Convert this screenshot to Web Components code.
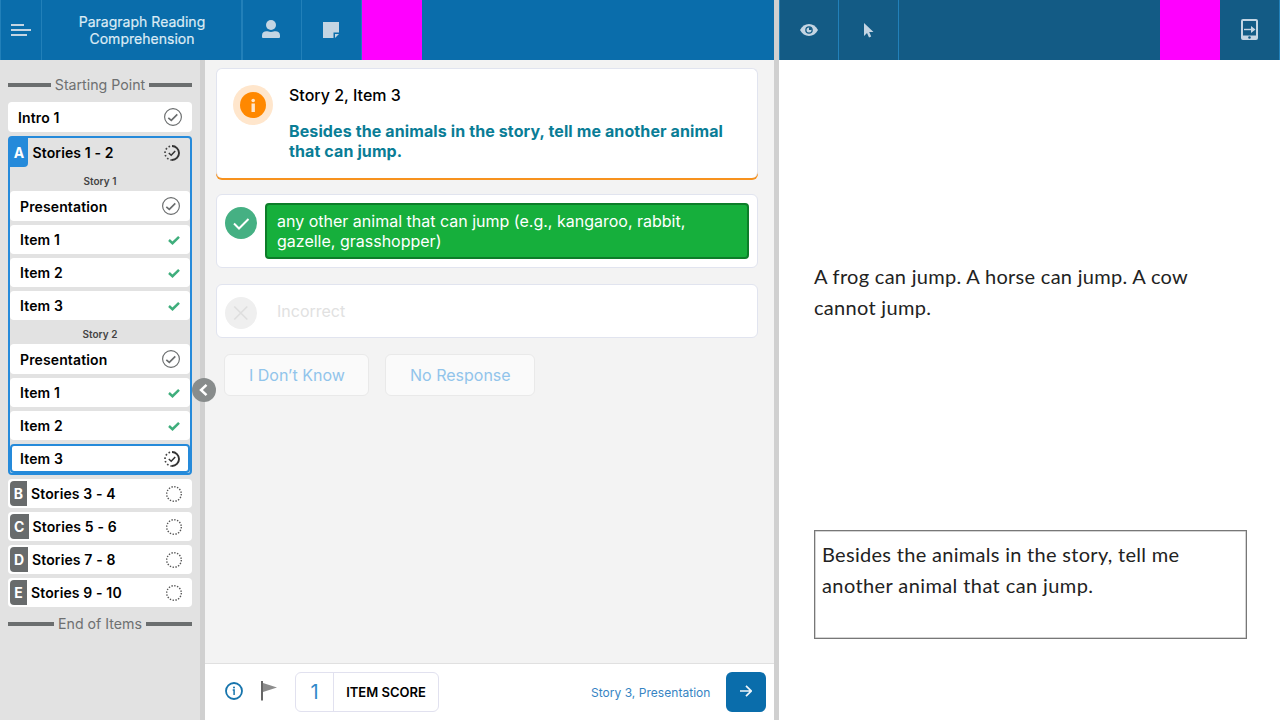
<!DOCTYPE html>
<html lang="en">
<head>
<meta charset="utf-8">
<title>Paragraph Reading Comprehension</title>
<style>
html,body{margin:0;height:100%;overflow:hidden}
body{font-family:Inter,"Liberation Sans",sans-serif;color:#000}
</style>
</head>
<body>
<assessment-app></assessment-app>
<script>
const define = (name, css, html) => customElements.define(name, class extends HTMLElement {
  constructor() {
    super();
    const t = document.createElement('template');
    t.innerHTML = `<style>*{box-sizing:border-box}:host{display:block;box-sizing:border-box}${css}</style>` + (typeof html === 'function' ? '' : html);
    this.attachShadow({mode: 'open'}).append(t.content.cloneNode(true));
  }
  connectedCallback() {
    if (typeof html !== 'function' || this.ready) return;
    this.ready = true;
    const t = document.createElement('template');
    t.innerHTML = html(this);
    this.shadowRoot.append(t.content);
  }
});

const ICONS = {
  menu: [20, 12, '<path d="M0 1h13M0 6h20M0 11h16" stroke="#c4d5e3" stroke-width="2"/>'],
  user: [18, 18, '<circle cx="9" cy="5" r="5" fill="#c4d5e3"/><path d="M0 18v-2.500C0 12.500 2 11.300 4.500 11.300c1.500 0 2.500.7 4.500.7s3-.7 4.500-.7c2.500 0 4.500 1.200 4.500 4.200V17q0 1-1 1H1q-1 0-1-1z" fill="#c4d5e3"/>'],
  note: [16, 16, '<path d="M0 0h16v10.500h-5.500V16H0z" fill="#c4d5e3"/><path d="M12 16v-4h4z" fill="#c4d5e3"/>'],
  eye: [18, 12, '<path d="M0 6C2 2.200 5.200 0 9 0s7 2.200 9 6c-2 3.800-5.200 6-9 6S2 9.800 0 6z" fill="#c4d5e3"/><circle cx="9" cy="6" r="3.800" fill="#135b85"/><circle cx="9" cy="6" r="2.500" fill="#c4d5e3"/><path d="M9 3.200V6h2.800a2.800 2.800 0 0 0-2.800-2.800z" fill="#135b85"/>'],
  pointer: [10, 15, '<path d="M0 0v13l3-3 2 4.500 2.200-1L5.200 9H9.500z" fill="#c4d5e3"/>'],
  tablet: [17, 21, '<rect x="1" y="1" width="15" height="19" rx="1" fill="none" stroke="#c4d5e3" stroke-width="2"/><path d="M1 16.500h15V20H1z" fill="#c4d5e3"/><circle cx="8.500" cy="18.500" r="1.300" fill="#135b85"/><path d="M3 10.500h8" stroke="#c4d5e3" stroke-width="1.400"/><path d="M10 7l4.500 3.500-4.500 3.500z" fill="#c4d5e3"/>'],
  done: [18, 18, '<circle cx="9" cy="9" r="8.400" fill="none" stroke="#6a6d6e" stroke-width="1.150"/><path d="M4.300 9.800l3 2.500 6-6" fill="none" stroke="#6a6d6e" stroke-width="1.700"/>'],
  partial: [16, 16, '<path d="M8 1a7 7 0 0 1 0 14" fill="none" stroke="#333" stroke-width="1.900"/><path d="M8 15A7 7 0 0 1 8 1" fill="none" stroke="#444" stroke-width="1.700" stroke-dasharray="1.600 2.060"/><path d="M4.800 8l2.400 2.200L11.200 6" fill="none" stroke="#333" stroke-width="1.500"/>'],
  check: [12, 10, '<path d="M1 5l3.500 3.200L11 1.800" fill="none" stroke="#3fae7c" stroke-width="2.500"/>'],
  empty: [16, 16, '<circle cx="8" cy="8" r="7.300" fill="none" stroke="#555" stroke-width="1.400" stroke-dasharray="1.400 1.467"/>'],
  notice: [40, 40, '<circle cx="20" cy="20" r="20" fill="#ffe6cc"/><circle cx="20" cy="20" r="13" fill="#ff8800"/><path d="M18.500 18.500h3.400V27h-3.400z" fill="#ffe6cc"/><circle cx="20.200" cy="15.500" r="1.800" fill="#ffe6cc"/>'],
  correct: [32, 32, '<circle cx="16" cy="16" r="16" fill="#45b083"/><path d="M9 16.500l5 5L23.500 12" fill="none" stroke="#fff" stroke-width="2"/>'],
  wrong: [32, 32, '<circle cx="16" cy="16" r="16" fill="#efefef"/><path d="M9.300 9.500l13 13m0-13l-13 13" stroke="#dedede" stroke-width="1.600"/>'],
  info: [18, 18, '<circle cx="9" cy="9" r="8" fill="none" stroke="#1674ac" stroke-width="1.800"/><path d="M7.700 8H9.100V13" fill="none" stroke="#1674ac" stroke-width="1.500"/><circle cx="9" cy="5.500" r="1" fill="#1674ac"/>'],
  flag: [16, 20, '<path d="M0 0h2v19.500H0z" fill="#666"/><path d="M2 2l14 4.500L2 11z" fill="#8c8c8c"/>'],
  arrow: [12, 12, '<path d="M0 6h11M6 .8L11.200 6 6 11.200" fill="none" stroke="#f0f6fa" stroke-width="1.700"/>'],
  collapse: [24, 24, '<circle cx="12" cy="12" r="12" fill="#888c8c"/><path d="M14.500 6.800L9 12l5.500 5.200" fill="none" stroke="#fff" stroke-width="2.500"/>']
};
define('ui-icon', ':host{flex:none}svg{display:block}', el => {
  const [w, h, body] = ICONS[el.getAttribute('name')];
  return `<svg width="${w}" height="${h}" viewBox="0 0 ${w} ${h}">${body}</svg>`;
});

define('tool-cell', `:host{flex:none;width:60px;height:60px;display:flex;align-items:center;justify-content:center;border-right:1px solid #2280b9}
:host([blank]){background:#f0f;border:0}`, '<slot></slot>');

define('top-bar', `:host{display:flex;height:60px;background:#0a6dab;border-left:1px solid #2280b9}
:host([dark]){background:#135b85}`, '<slot></slot>');

define('section-rule', `:host{display:flex;align-items:center;gap:4px;height:34px;font-size:14.200px;color:#6e7071;white-space:nowrap}
i{flex:1;height:4px;background:#6b6e6f}span{display:block;margin-top:-2px}`, '<i></i><span><slot></slot></span><i></i>');

define('nav-row', `:host{display:flex;align-items:center;height:29px;margin-bottom:4px;padding:0 10px;background:#fff;border-radius:4px;font-size:14px;font-weight:600;letter-spacing:.13px}
:host([tall]){height:30px}
:host([inner]){padding-right:10px}
:host([current]){border:2px solid #258ada;padding:0 8px;margin-bottom:0}
:host([letter]){padding:0 10px 0 2px}
:host([group]){background:none;padding:0 10px 0 0;margin:0}
b{height:25px;width:17px;border-radius:4px 0 0 4px;background:#686b6c;color:#fff;display:flex;align-items:center;justify-content:center;margin-right:4px;font-weight:700}
:host([letter=C]) b{width:18.500px}:host([letter=D]) b{width:18px}
:host([group]) b{width:18px;height:29px;background:#258ada;border-radius:0 0 4px 0;margin-right:4.500px;align-self:flex-start}
:host([group]) span{margin-top:-1px}
span{flex:1;white-space:nowrap}`,
el => `${el.hasAttribute('letter') ? `<b>${el.getAttribute('letter')}</b>` : ''}<span><slot></slot></span><ui-icon name="${el.getAttribute('state')}"></ui-icon>`);

define('story-label', ':host{text-align:center;height:23px;line-height:27px;font-size:10px;font-weight:600;color:#444}', '<slot></slot>');

define('nav-panel', `:host{position:relative;background:#e2e2e2;border-right:5px solid #d0d0d0;padding:8px 8px 0}
.g{border:2px solid #258ada;border-radius:4px;margin-bottom:4px;height:339px}
.c{position:absolute;left:192px;top:318px;z-index:2}
.last{margin-top:-4px}`,
`<section-rule>Starting Point</section-rule>
<nav-row tall state="done">Intro 1</nav-row>
<div class="g">
<nav-row tall group letter="A" state="partial">Stories 1 - 2</nav-row>
<story-label>Story 1</story-label>
<nav-row tall inner state="done">Presentation</nav-row>
<nav-row inner state="check">Item 1</nav-row><nav-row inner state="check">Item 2</nav-row><nav-row inner state="check">Item 3</nav-row>
<story-label style="margin-top:-3px">Story 2</story-label>
<nav-row tall inner state="done">Presentation</nav-row>
<nav-row inner state="check">Item 1</nav-row><nav-row inner state="check">Item 2</nav-row><nav-row current state="partial">Item 3</nav-row>
</div>
<nav-row letter="B" state="empty">Stories 3 - 4</nav-row>
<nav-row letter="C" state="empty">Stories 5 - 6</nav-row>
<nav-row letter="D" state="empty">Stories 7 - 8</nav-row>
<nav-row letter="E" state="empty">Stories 9 - 10</nav-row>
<section-rule class="last">End of Items</section-rule>
<ui-icon class="c" name="collapse"></ui-icon>`);

define('answer-card', `:host{display:flex;background:#fff;border:1px solid #e1e4ef;border-radius:6px;padding:8px;gap:8px;height:var(--h);margin-bottom:16px;font-size:16px;line-height:20px}
ui-icon{margin-top:4px}
div{flex:1;padding:6px 10px;border:2px solid transparent;border-radius:4px;color:#e1e1e1}
:host([selected]) div{background:#16af3c;border-color:#0d7d29;color:#fff}`,
el => `<ui-icon name="${el.getAttribute('icon')}"></ui-icon><div><slot></slot></div>`);

define('question-card', `:host{display:flex;background:#fff;border:1px solid #e1e4ef;border-bottom:0;border-radius:6px;box-shadow:0 2px 0 #f7921e;height:110px;margin-bottom:16px;padding:16px}
div{margin-left:16px;font-size:16px;line-height:20px}h3{font:inherit;font-weight:500;margin:0 0 16px}
p{margin:0;font-weight:700;color:#0a7d96;white-space:nowrap;letter-spacing:.11px}`,
'<ui-icon name="notice"></ui-icon><div><h3><slot name="title"></slot></h3><p><slot></slot></p></div>');

define('ghost-button', ':host{height:42px;padding:0 24px;border:1px solid #e9e9e9;border-radius:6px;background:#fafafa;color:#91c4eb;font-size:16px;line-height:41px;white-space:nowrap;text-align:center;width:var(--w)}', '<slot></slot>');

define('score-box', `:host{display:flex;align-items:center;width:144px;height:40px;border:1px solid #e1e1ef;border-radius:6px;margin-left:18px}
b{width:38px;height:100%;border-right:1px solid #e1e1ef;font-size:20px;font-weight:400;color:#3189c9;line-height:38px;text-align:center}
span{flex:1;text-align:center;font-size:13px;font-weight:600}`, '<b>1</b><span>ITEM SCORE</span>');

define('bottom-bar', `:host{display:flex;align-items:center;height:57px;background:#fff;border-top:1px solid #e0e0e0;padding:0 8px 0 20px}
.i{margin-top:-2px}.f{margin:-2px 0 0 18px}
a{margin-left:auto;font-size:12px;letter-spacing:.04px;color:#3684c3;margin-right:15.500px}
.n{width:40px;height:40px;border-radius:6px;background:#0a6dab;display:flex;align-items:center;justify-content:center;padding-bottom:2px}`,
`<ui-icon class="i" name="info"></ui-icon><ui-icon class="f" name="flag"></ui-icon><score-box></score-box>
<a>Story 3, Presentation</a><div class="n"><ui-icon name="arrow"></ui-icon></div>`);

define('work-area', `:host{display:flex;flex-direction:column;background:#f3f3f3}
main{flex:1;padding:8px 16px 0 11px}.b{display:flex;gap:16px;padding-left:8px}`,
`<main><question-card><span slot="title">Story 2, Item 3</span>Besides the animals in the story, tell me another animal<br>that can jump.</question-card>
<answer-card selected icon="correct" style="--h:74px">any other animal that can jump (e.g., kangaroo, rabbit,<br>gazelle, grasshopper)</answer-card>
<answer-card icon="wrong" style="--h:54px">Incorrect</answer-card>
<div class="b"><ghost-button style="--w:145px">I Don’t Know</ghost-button><ghost-button style="--w:150px">No Response</ghost-button></div></main>
<bottom-bar></bottom-bar>`);

define('student-view', `:host{background:#fff;font-family:Lato,"Open Sans",sans-serif;font-size:20px;line-height:31px;color:#222;padding:201px 33.500px 0 35px}
div{white-space:nowrap;height:269px}
section{height:109px;border:1px solid #777;box-shadow:inset 0 0 0 .5px #aaa;padding:8px 7px;white-space:nowrap}
span{display:block;letter-spacing:.3px}`,
`<div><span>A frog can jump. A horse can jump. A cow</span><span>cannot jump.</span></div>
<section><span>Besides the animals in the story, tell me</span><span style="letter-spacing:.4px">another animal that can jump.</span></section>`);

define('assessment-app', `:host{display:grid;grid-template-columns:774px 5px 501px;height:720px;width:1280px}
.l,.r{display:grid;grid-template-rows:60px 660px}.d{background:#d0d0d0}
.body{display:grid;grid-template-columns:205px 569px}
.m{width:41px}.t{width:200px;padding-left:1px;text-align:center;font-size:14px;line-height:17px;color:#dcebf5;letter-spacing:.02px;-webkit-text-stroke:.2px #dcebf5}
.u{box-shadow:inset 1px 0 #2280b9}
.push{margin-left:auto}`,
`<div class="l"><top-bar><tool-cell class="m"><ui-icon name="menu"></ui-icon></tool-cell><tool-cell class="t">Paragraph Reading<br>Comprehension</tool-cell><tool-cell class="u"><ui-icon style="margin:-2px 1px 0 0" name="user"></ui-icon></tool-cell><tool-cell><ui-icon style="margin-right:1px" name="note"></ui-icon></tool-cell><tool-cell blank></tool-cell></top-bar>
<div class="body"><nav-panel></nav-panel><work-area></work-area></div></div>
<div class="d"></div>
<div class="r"><top-bar dark><tool-cell style="width:59px"><ui-icon name="eye"></ui-icon></tool-cell><tool-cell><ui-icon name="pointer"></ui-icon></tool-cell><tool-cell blank class="push"></tool-cell><tool-cell><ui-icon style="margin-top:-1px" name="tablet"></ui-icon></tool-cell></top-bar>
<student-view></student-view></div>`);
</script>
</body>
</html>
